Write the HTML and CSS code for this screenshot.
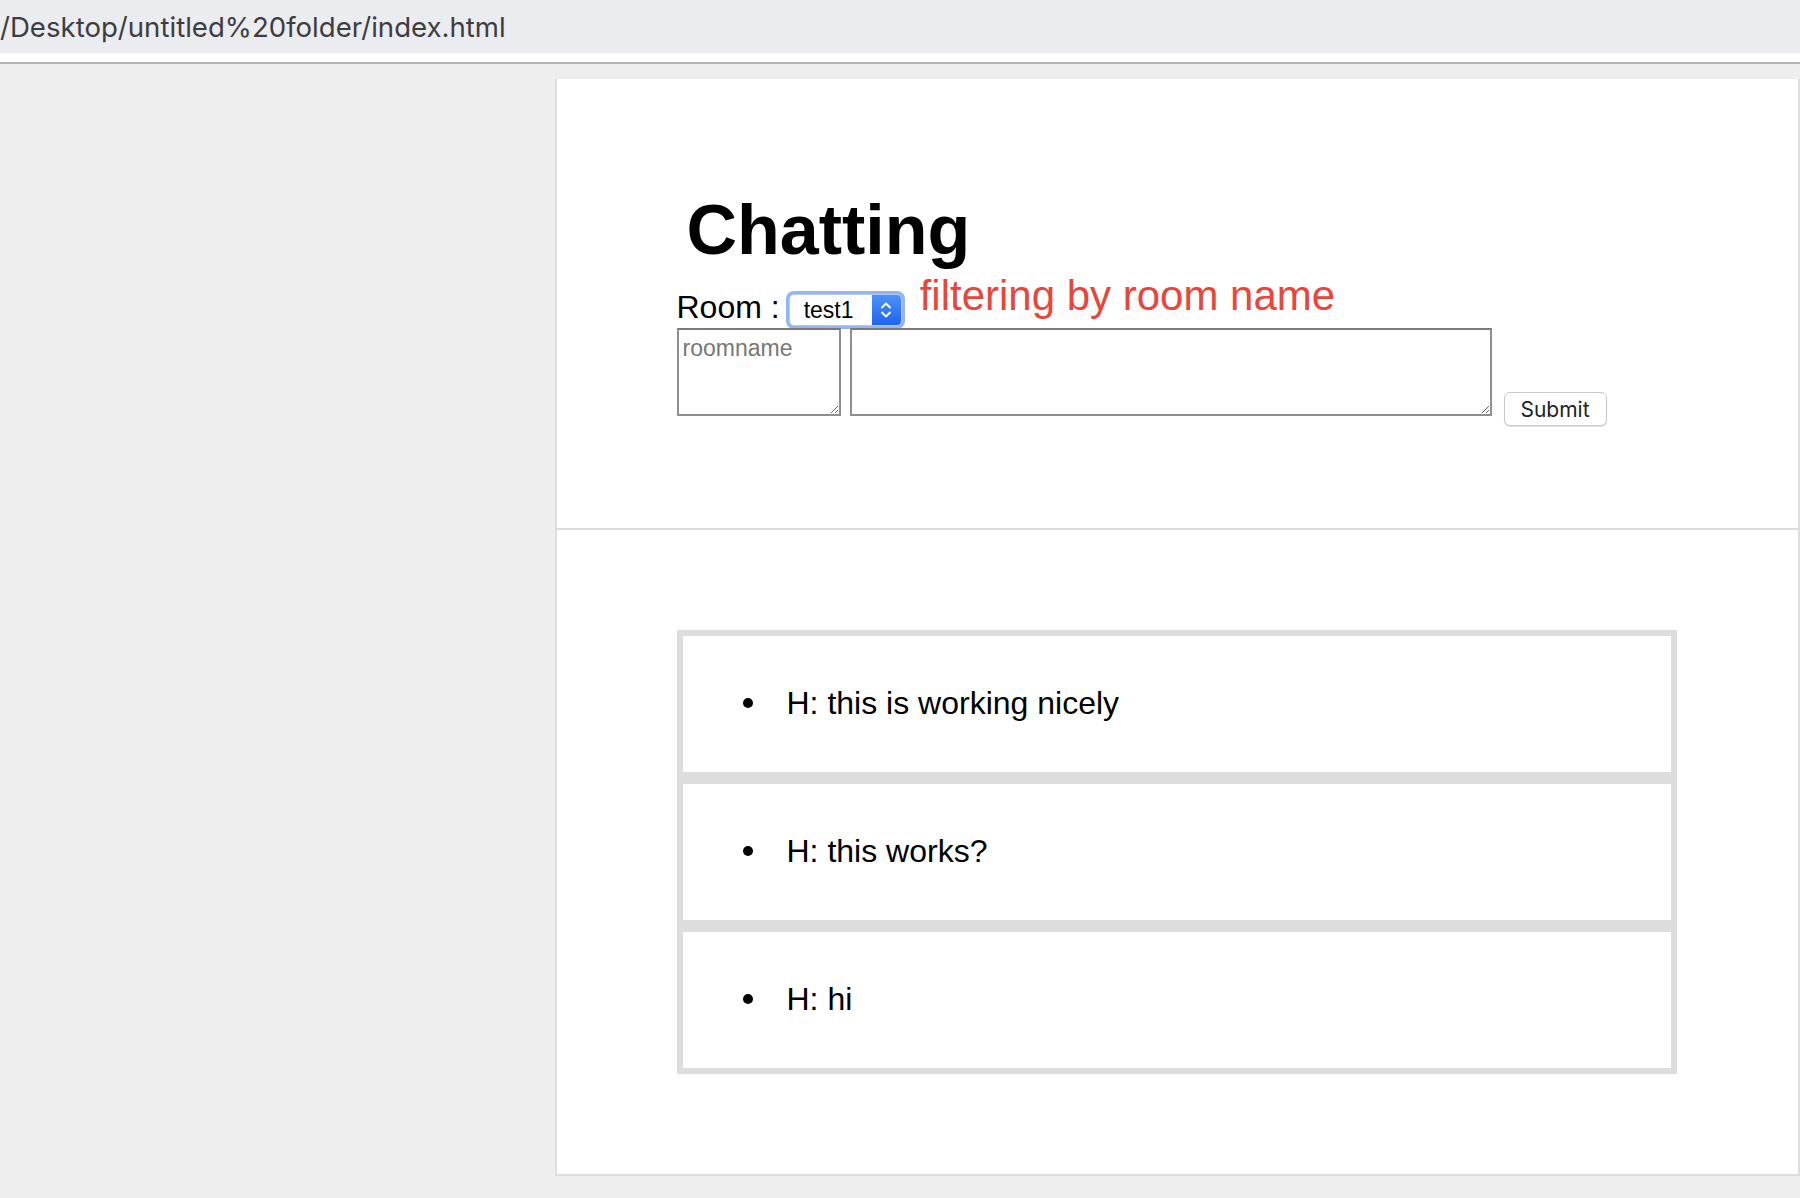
FILE: index.html
```html
<!DOCTYPE html>
<html lang="en">
<head>
<meta charset="utf-8">
<title>Chatting</title>
<link rel="stylesheet" href="styles.css">
</head>
<body>
<div class="urlbar"><span class="url">/Desktop/untitled%20folder/index.html</span></div>
<div class="toolbar-edge"></div>
<div class="page">
  <div class="card">
    <section class="composer">
      <div class="wrap">
        <h1 class="title">Chatting</h1>
        <div class="room-row">
          <span class="room-label">Room :</span>
          <span class="select">
            <span class="select-value">test1</span>
            <span class="select-arrows">
              <svg width="12" height="20" viewBox="0 0 12 20"><path d="M2 7.5 L6 3.5 L10 7.5" fill="none" stroke="#fff" stroke-width="1.8" stroke-linecap="round" stroke-linejoin="round"/><path d="M2 12.5 L6 16.5 L10 12.5" fill="none" stroke="#fff" stroke-width="1.8" stroke-linecap="round" stroke-linejoin="round"/></svg>
            </span>
          </span>
          <span class="note">filtering by room name</span>
        </div>
        <div class="form-row">
          <textarea class="ta ta-room" placeholder="roomname"></textarea>
          <textarea class="ta ta-msg"></textarea>
          <button class="submit" type="button">Submit</button>
        </div>
      </div>
    </section>
    <section class="messages">
      <ul class="msg-list">
        <li class="msg">H: this is working nicely</li>
        <li class="msg">H: this works?</li>
        <li class="msg">H: hi</li>
      </ul>
    </section>
  </div>
</div>
</body>
</html>
```
FILE: styles.css
```css
* { box-sizing: border-box; }
html, body { margin: 0; padding: 0; }
body {
  width: 1800px;
  height: 1198px;
  overflow: hidden;
  background: #eeeeee;
  font-family: "Liberation Sans", Arial, sans-serif;
}
.urlbar {
  height: 53px;
  background: #ebecf0;
  display: flex;
  align-items: center;
}
.url {
  font-family: Inter, "Liberation Sans", sans-serif;
  font-size: 27.6px;
  color: #3d3d3f;
}
.toolbar-edge {
  height: 11px;
  background: #ffffff;
  border-bottom: 2px solid #b4b4b4;
}
.page {
  padding: 15px 0 0 555px;
  height: 1134px;
}
.card {
  background: #ffffff;
  border: 2px solid #dddddd;
  border-top: none;
  height: 1097px;
  padding-right: 2px;
}
.composer {
  padding: 111px 2px 0 0;
  height: 451px;
  border-bottom: 2px solid #dcdcdc;
  margin-right: -2px;
}
.wrap {
  width: 1000px;
  margin: 0 auto;
}
.title {
  margin: 0 0 10px;
  padding-left: 10px;
  font-size: 70px;
  line-height: 80px;
  font-weight: bold;
  color: #000;
}
.room-row {
  display: flex;
  align-items: baseline;
}
.room-label {
  font-size: 32px;
  color: #000;
  margin-right: 9px;
}
.select {
  display: inline-flex;
  align-items: center;
  width: 113px;
  height: 32px;
  border-radius: 5px;
  background: #fff;
  border: 1px solid #b9c9e6;
  box-shadow: 0 0 0 3px #93b5f4;
  overflow: hidden;
}
.select-value {
  flex: 1;
  padding-left: 14px;
  font-family: "Liberation Sans", Arial, sans-serif;
  font-size: 23px;
  line-height: 30px;
  color: #000;
}
.select-arrows {
  width: 29px;
  height: 30px;
  display: flex;
  align-items: center;
  justify-content: center;
  background: linear-gradient(#4d92fa, #1e63ef);
}
.note {
  position: relative;
  top: -8px;
  margin-left: 18px;
  font-size: 42px;
  color: #e9453a;
}
.form-row {
  display: flex;
  align-items: flex-start;
  margin-top: 0;
}
.ta {
  height: 88px;
  border: 2px solid #8f8f8f;
  border-top-color: #7a7a7a;
  padding: 5px 4px 2px;
  font-family: "Liberation Sans", Arial, sans-serif;
  font-size: 23px;
  background: #fff;
  margin: 0;
}
.ta::placeholder { color: #777777; }
.ta-room { width: 164px; margin-right: 9px; }
.ta-msg { width: 642px; }
.submit {
  margin: 64px 0 0 12px;
  width: 103px;
  height: 34px;
  background: #fff;
  border: 1px solid #c9c9c9;
  border-radius: 6px;
  box-shadow: 0 1px 1px rgba(0,0,0,0.12);
  font-family: Inter, "Liberation Sans", sans-serif;
  font-size: 21px;
  color: #222;
  padding: 0;
}
.messages {
  padding: 100px 0;
}
.msg-list {
  list-style: none;
  margin: 0 auto;
  padding: 0;
  width: 1000px;
}
.msg {
  display: flex;
  align-items: center;
  border: 6px solid #dddddd;
  padding: 47px 0 49px 60px;
  font-size: 32px;
  line-height: 40px;
  color: #000;
}
.msg::before {
  content: "";
  width: 10px;
  height: 10px;
  border-radius: 50%;
  background: #000;
  margin-right: 34px;
  flex: none;
}
```
